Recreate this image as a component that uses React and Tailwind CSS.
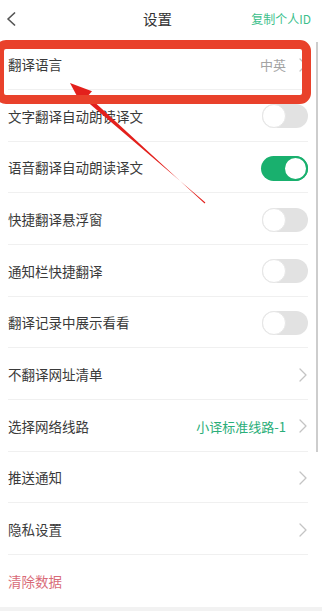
import React from "react";

const Chevron = () => (
  <svg width="8" height="14" viewBox="0 0 8 14" className="shrink-0">
    <path d="M1 1 L7 7 L1 13" fill="none" stroke="#c4c4c4" strokeWidth="1.3" strokeLinecap="round" strokeLinejoin="round" />
  </svg>
);

const Toggle = ({ on }) =>
  on ? (
    <div className="w-[47px] h-[25px] rounded-full bg-[#19b06e] flex items-center justify-end">
      <div className="w-[25px] h-[25px] rounded-full bg-white border-2 border-[#19b06e]" />
    </div>
  ) : (
    <div className="w-[46px] h-[24px] rounded-full bg-[#e2e2e2] flex items-center justify-start">
      <div className="w-[24px] h-[24px] rounded-full bg-white border border-[#e6e6e6]" />
    </div>
  );

const rows = [
  { label: "翻译语言", value: "中英", chevron: true },
  { label: "文字翻译自动朗读译文", toggle: false },
  { label: "语音翻译自动朗读译文", toggle: true },
  { label: "快捷翻译悬浮窗", toggle: false },
  { label: "通知栏快捷翻译", toggle: false },
  { label: "翻译记录中展示看看", toggle: false },
  { label: "不翻译网址清单", chevron: true },
  { label: "选择网络线路", value: "小译标准线路-1", green: true, chevron: true },
  { label: "推送通知", chevron: true },
  { label: "隐私设置", chevron: true },
  { label: "清除数据", danger: true, last: true },
];

export default function App() {
  return (
    <div
      className="relative w-[322px] h-[611px] bg-white overflow-hidden"
      style={{ fontFamily: '"Noto Sans CJK SC", "Noto Sans", sans-serif' }}
    >
      {/* header */}
      <div className="h-[38.3px] grid grid-cols-[1fr_auto_1fr] items-center">
        <div className="pl-[6px] flex items-center">
          <svg width="10" height="14" viewBox="0 0 10 14">
            <path d="M8.5 1 L2 7 L8.5 13" fill="none" stroke="#555" strokeWidth="1.7" strokeLinecap="round" strokeLinejoin="round" />
          </svg>
        </div>
        <div className="text-[14.5px] text-[#333] mr-[7px] leading-none">设置</div>
        <div className="flex justify-end pr-[11px] text-[12px] text-[#3dbf8c] leading-none">复制个人ID</div>
      </div>

      {/* list */}
      <div className="flex flex-col">
        {rows.map((r, i) => (
          <div key={i} className="h-[51.7px] pl-[8px] pr-[14px]">
            <div
              className={`h-full flex items-center justify-between pt-[2px] ${
                r.last ? "" : "border-b border-[#f0f0f0]"
              }`}
            >
              <span
                className={`text-[13.5px] leading-none ${
                  r.danger ? "text-[#d96b78]" : "text-[#3a3a3a]"
                }`}
              >
                {r.label}
              </span>
              <div className="flex items-center">
                {r.value && (
                  <span
                    className={`text-[13px] leading-none mr-[13px] ${
                      r.green ? "text-[#2aae78]" : "text-[#a3a3a3]"
                    }`}
                  >
                    {r.value}
                  </span>
                )}
                {r.toggle !== undefined && <Toggle on={r.toggle} />}
                {r.chevron && (
                  <div className="mr-[1px]">
                    <Chevron />
                  </div>
                )}
              </div>
            </div>
          </div>
        ))}
      </div>

      {/* bottom band */}
      <div className="absolute left-0 right-0 top-[607px] h-[4px] bg-[#f2f2f2]" />

      {/* scrollbar */}
      <div className="absolute left-[316px] top-[42px] w-[2px] h-[410px] bg-[#cdcdcd]" />

      {/* annotation arrow */}
      <svg className="absolute left-0 top-0 pointer-events-none" width="322" height="611" viewBox="0 0 322 611">
        <polygon points="70,83 92,91.2 81,103.8" fill="#e3201c" />
        <polygon points="88.2,96.2 84.6,99.6 205.4,202.6 204.6,203.4" fill="#e3201c" />
      </svg>

      {/* annotation box */}
      <div className="absolute left-[-5px] top-[40px] w-[316px] h-[64px] border-[9px] border-[#e9412b] rounded-[11px] pointer-events-none" />
    </div>
  );
}
